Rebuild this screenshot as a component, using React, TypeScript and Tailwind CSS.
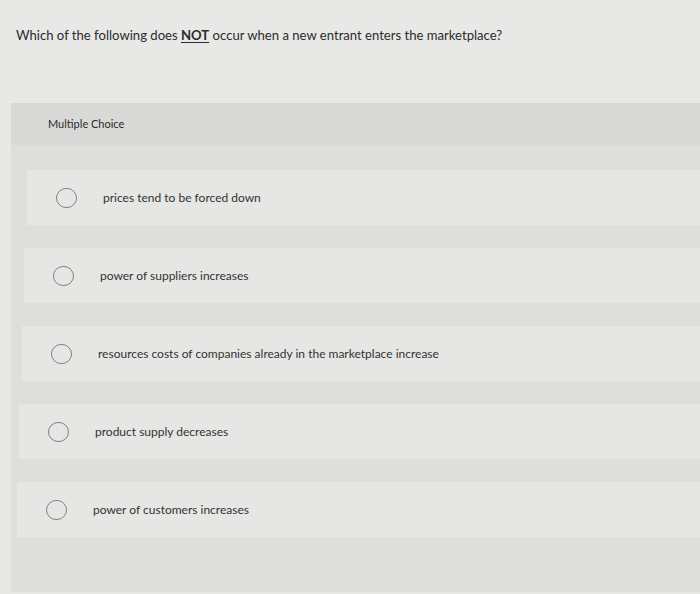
import React from "react";

const options = [
  { text: "prices tend to be forced down", shift: "ml-[4px]" },
  { text: "power of suppliers increases", shift: "ml-[1px]" },
  { text: "resources costs of companies already in the marketplace increase", shift: "ml-[-1px]" },
  { text: "product supply decreases", shift: "ml-[-4px]" },
  { text: "power of customers increases", shift: "ml-[-6px]" },
];

export default function App() {
  return (
    <div
      className="h-[594px] w-[700px] overflow-hidden bg-[#e8e8e6] pt-[27px] text-[#2b2b2b]"
      style={{ fontFamily: "Lato, 'Open Sans', sans-serif" }}
    >
      <p className="pl-[16px] text-[13.1px] leading-[16px]">
        Which of the following does{" "}
        <span className="font-bold underline underline-offset-2">NOT</span> occur when a new entrant enters the
        marketplace?
      </p>
      <div className="ml-[11px] mt-[60px] h-[489px] bg-[#dededc]">
        <div className="flex h-[42px] items-center bg-[#d9d9d7] pl-[37px] text-[11px]">Multiple Choice</div>
        <div className="flex flex-col gap-[23px] pl-[12px] pt-[25px]">
          {options.map((o) => (
            <div key={o.text} className={`flex h-[55px] items-center bg-[#e6e6e4] ${o.shift}`}>
              <span className="ml-[29px] h-[20px] w-[21px] shrink-0 rounded-full border-[1.5px] border-[#808080]" />
              <span className="ml-[26px] text-[12px] text-[#333]">{o.text}</span>
            </div>
          ))}
        </div>
      </div>
    </div>
  );
}
